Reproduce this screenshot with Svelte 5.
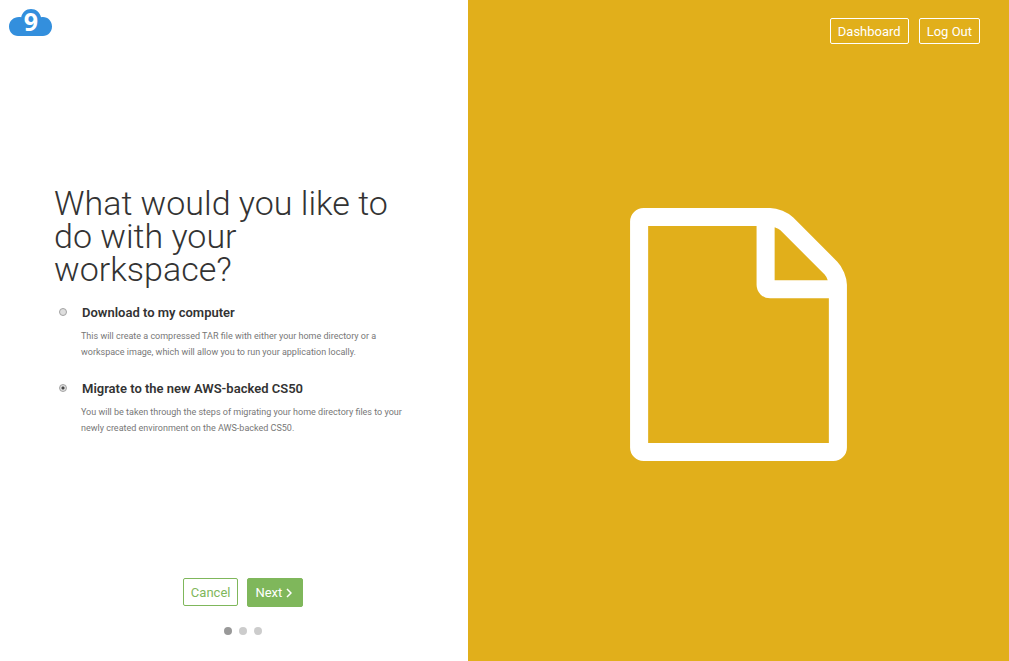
<script>
  let choice = $state('migrate');
  const step = 0;

  const options = [
    {
      id: 'download',
      title: 'Download to my computer',
      text: 'This will create a compressed TAR file with either your home directory or a workspace image, which will allow you to run your application locally.'
    },
    {
      id: 'migrate',
      title: 'Migrate to the new AWS-backed CS50',
      text: 'You will be taken through the steps of migrating your home directory files to your newly created environment on the AWS-backed CS50.'
    }
  ];
</script>

<div class="page">
  <main class="panel">
    <header>
      <svg class="logo" viewBox="0 0 43 28" role="img" aria-label="Cloud9">
        <path
          fill="#338fdd"
          d="M9 27C4 27 0 23 0 17.500 0 12 4.500 8 10 8c.7 0 1.500.1 2.200.3C13.200 3.500 17 0 22 0s9 3.500 10 8.200c.7-.2 1.300-.2 2-.2 5 0 9 4.200 9 9.500s-4 9.500-9 9.500z"
        />
        <text x="22" y="22">9</text>
      </svg>
    </header>

    <form class="question" id="workspace-form" onsubmit={(e) => e.preventDefault()}>
      <h1>What would you like to do with your workspace?</h1>
      {#each options as option}
        <div class="option">
          <input
            type="radio"
            name="action"
            id={option.id}
            value={option.id}
            bind:group={choice}
            aria-describedby="{option.id}-text"
          />
          <div class="copy">
            <label for={option.id}>{option.title}</label>
            <p id="{option.id}-text">{option.text}</p>
          </div>
        </div>
      {/each}
    </form>

    <footer>
      <div class="actions">
        <button type="button" class="btn cancel">Cancel</button>
        <button type="submit" class="btn next" form="workspace-form">
          Next
          <svg class="chevron" viewBox="0 0 6 10" aria-hidden="true">
            <path d="M1 1l4 4-4 4" fill="none" stroke="#fff" stroke-width="1.500" />
          </svg>
        </button>
      </div>
      <div class="dots">
        {#each [0, 1, 2] as n}
          <span class="dot" class:active={n === step}></span>
        {/each}
      </div>
    </footer>
  </main>

  <aside class="side">
    <nav>
      <a class="btn outline" href="#dashboard">Dashboard</a>
      <a class="btn outline" href="#logout">Log Out</a>
    </nav>
    <div class="art">
      <svg class="file" viewBox="0 0 1536 1792" aria-hidden="true">
        <path
          fill="#fff"
          d="M1468 380q28 28 48 76t20 88v1152q0 40-28 68t-68 28H96q-40 0-68-28t-28-68V96q0-40 28-68T96 0h896q40 0 88 20t76 48zm-444-244v376h376q-10-29-22-41l-313-313q-12-12-41-22zm384 1528V640H992q-40 0-68-28t-28-68V128H128v1536z"
        />
      </svg>
    </div>
  </aside>
</div>

<style>
  :global(body) {
    margin: 0;
  }

  .page {
    display: flex;
    min-height: 100vh;
    background: #fff;
    color: #333;
    font-family: Roboto, sans-serif;
    font-size: 13px;
  }

  .panel {
    flex: 0 0 46.4%;
    box-sizing: border-box;
    display: grid;
    grid-template-rows: 1fr auto 1fr;
  }

  header {
    padding: 9px;
  }

  .logo {
    display: block;
    width: 43px;
    height: 28px;
    overflow: visible;
  }

  .logo text {
    fill: #fff;
    font-family: "Open Sans", sans-serif;
    font-size: 25px;
    font-weight: 700;
    text-anchor: middle;
  }

  .question {
    max-width: 360px;
    padding: 0 36px 39px 54px;
  }

  h1 {
    margin: 0 0 18px;
    font-size: 34px;
    font-weight: 300;
    line-height: 33px;
  }

  .option {
    display: flex;
    gap: 14px;
    padding-left: 5px;
  }

  .option + .option {
    margin-top: 20px;
  }

  input {
    appearance: none;
    flex: none;
    box-sizing: border-box;
    width: 8px;
    height: 8px;
    margin: 4px 0 0;
    border: 1px solid #a3a3a3;
    border-radius: 50%;
    background: #dedede;
  }

  input:checked {
    background: radial-gradient(circle, #444 0 1px, #dedede 2px);
  }

  label {
    display: block;
    padding-left: 1px;
    font-weight: 600;
    line-height: 18px;
  }

  p {
    margin: 6px 0 0;
    color: #777;
    font-size: 9px;
    line-height: 16px;
  }

  footer {
    align-self: end;
    display: flex;
    flex-direction: column;
    align-items: center;
    gap: 20px;
    padding: 0 36px 26px 54px;
  }

  .actions {
    display: flex;
    gap: 9px;
  }

  .btn {
    display: flex;
    align-items: center;
    box-sizing: border-box;
    height: 28px;
    padding: 0 7px;
    border: 1px solid #7fb75b;
    border-radius: 2px;
    font: inherit;
    text-decoration: none;
    cursor: pointer;
  }

  .cancel {
    background: #fff;
    color: #7fb75b;
  }

  .next {
    gap: 4px;
    height: 29px;
    padding-right: 10px;
    background: #7fb75b;
    color: #fff;
  }

  .chevron {
    width: 6px;
    height: 10px;
  }

  .dots {
    display: flex;
    gap: 7px;
  }

  .dot {
    width: 8px;
    height: 8px;
    border-radius: 50%;
    background: #ccc;
  }

  .dot.active {
    background: #999;
  }

  .side {
    flex: 1;
    display: grid;
    grid-template-rows: 1fr auto 1fr;
    background: #e1af1b;
  }

  nav {
    display: flex;
    justify-content: flex-end;
    align-items: flex-start;
    gap: 10px;
    padding: 18px 29px 0;
  }

  .outline {
    height: 26px;
    border-color: #fff;
    color: #fff;
  }

  .art {
    display: flex;
    justify-content: center;
    padding-top: 8px;
  }

  .file {
    width: 217px;
    height: 253px;
  }
</style>
